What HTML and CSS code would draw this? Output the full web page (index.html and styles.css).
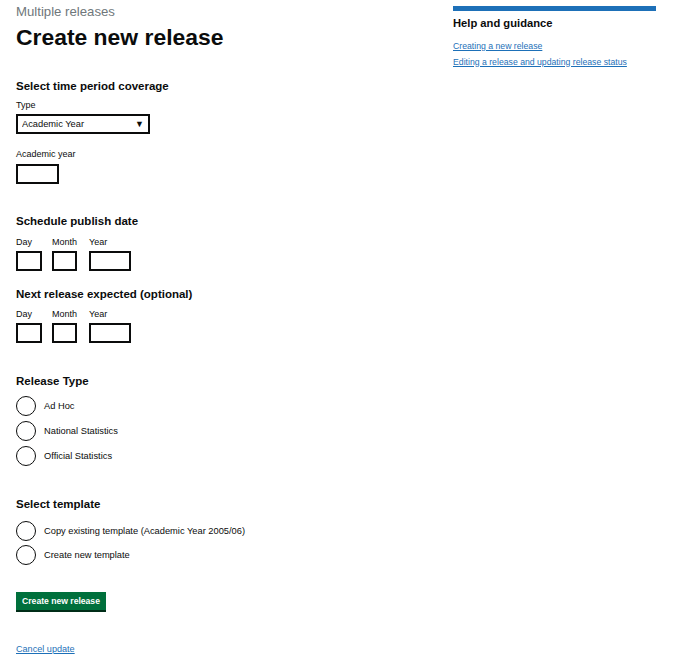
FILE: index.html
```html
<!DOCTYPE html>
<html lang="en">
<head>
<meta charset="utf-8">
<title>Create new release</title>
<link rel="stylesheet" href="styles.css">
</head>
<body>
<div class="page">
  <main class="main">
    <span class="caption">Multiple releases</span>
    <h1 class="title">Create new release</h1>

    <form class="form">
      <fieldset class="group">
        <legend class="heading heading-first">Select time period coverage</legend>
        <label class="label label-type" for="type">Type</label>
        <span class="select-wrap">
          <select class="select" id="type">
            <option>Academic Year</option>
          </select>
        </span>
        <label class="label label-year" for="ayear">Academic year</label>
        <input class="input input-ayear" id="ayear" type="text">
      </fieldset>

      <fieldset class="group">
        <legend class="heading heading-schedule">Schedule publish date</legend>
        <div class="date">
          <div class="date-item date-day">
            <label class="label" for="sday">Day</label>
            <input class="input" id="sday" type="text">
          </div>
          <div class="date-item date-month">
            <label class="label" for="smonth">Month</label>
            <input class="input" id="smonth" type="text">
          </div>
          <div class="date-item date-year">
            <label class="label" for="syear">Year</label>
            <input class="input" id="syear" type="text">
          </div>
        </div>
      </fieldset>

      <fieldset class="group">
        <legend class="heading heading-next">Next release expected (optional)</legend>
        <div class="date date-next">
          <div class="date-item date-day">
            <label class="label" for="nday">Day</label>
            <input class="input" id="nday" type="text">
          </div>
          <div class="date-item date-month">
            <label class="label" for="nmonth">Month</label>
            <input class="input" id="nmonth" type="text">
          </div>
          <div class="date-item date-year">
            <label class="label" for="nyear">Year</label>
            <input class="input" id="nyear" type="text">
          </div>
        </div>
      </fieldset>

      <fieldset class="group">
        <legend class="heading heading-type">Release Type</legend>
        <div class="radios radios-type">
          <label class="radio"><input class="radio-input" type="radio" name="rtype"><span>Ad Hoc</span></label>
          <label class="radio"><input class="radio-input" type="radio" name="rtype"><span>National Statistics</span></label>
          <label class="radio"><input class="radio-input" type="radio" name="rtype"><span>Official Statistics</span></label>
        </div>
      </fieldset>

      <fieldset class="group">
        <legend class="heading heading-template">Select template</legend>
        <div class="radios radios-template">
          <label class="radio"><input class="radio-input" type="radio" name="tpl"><span>Copy existing template (Academic Year 2005/06)</span></label>
          <label class="radio"><input class="radio-input" type="radio" name="tpl"><span>Create new template</span></label>
        </div>
      </fieldset>

      <button class="button" type="button">Create new release</button>
      <a class="link cancel" href="#">Cancel update</a>
    </form>
  </main>

  <aside class="aside">
    <h2 class="aside-heading">Help and guidance</h2>
    <ul class="aside-list">
      <li><a class="link" href="#">Creating a new release</a></li>
      <li><a class="link" href="#">Editing a release and updating release status</a></li>
    </ul>
  </aside>
</div>
</body>
</html>
```

FILE: styles.css
```css
* { box-sizing: border-box; }

html, body {
  margin: 0;
  padding: 0;
  background: #ffffff;
}

body {
  font-family: "Liberation Sans", Arial, sans-serif;
  color: #0b0c0c;
}

.page {
  display: grid;
  grid-template-columns: 1fr 203px;
  column-gap: 20px;
  padding: 0 20px 0 16px;
  align-items: start;
}

.main {
  display: flex;
  flex-direction: column;
  align-items: flex-start;
}

.caption {
  display: block;
  margin-top: 4px;
  font-size: 13.2px;
  line-height: 16px;
  color: #6f777b;
}

.title {
  margin: 4px 0 0;
  font-size: 22.9px;
  line-height: 26px;
  font-weight: 700;
}

.form {
  display: flex;
  flex-direction: column;
  align-items: flex-start;
}

.group {
  border: 0;
  margin: 0;
  padding: 0;
  min-width: 0;
  display: flex;
  flex-direction: column;
  align-items: flex-start;
}

.heading {
  padding: 0;
  font-size: 11.5px;
  line-height: 14px;
  font-weight: 700;
  float: left;
  width: 100%;
}

.heading-first { margin-top: 29px; }
.heading-schedule { margin-top: 30px; }
.heading-next { margin-top: 16px; }
.heading-type { margin-top: 31px; }
.heading-template { margin-top: 31px; }

.label {
  display: block;
  font-size: 9px;
  line-height: 12px;
}

.label-type { margin-top: 6px; }
.label-year { margin-top: 14px; }

.select-wrap {
  position: relative;
  display: block;
  margin-top: 3px;
  width: 134px;
  height: 20px;
}

.select-wrap::after {
  content: "\25BC";
  position: absolute;
  right: 6px;
  top: 4px;
  font-size: 9px;
  line-height: 12px;
  color: #0b0c0c;
  pointer-events: none;
}

.select {
  appearance: none;
  -webkit-appearance: none;
  display: block;
  width: 100%;
  height: 20px;
  margin: 0;
  padding: 0 0 0 4px;
  border: 2px solid #0b0c0c;
  border-radius: 0;
  background: #ffffff;
  font-family: inherit;
  font-size: 9.3px;
  color: #0b0c0c;
}

.input {
  display: block;
  height: 20px;
  margin: 4px 0 0;
  padding: 0 3px;
  border: 2px solid #0b0c0c;
  border-radius: 0;
  background: #ffffff;
  font-family: inherit;
  font-size: 9.3px;
}

.input-ayear { width: 43px; }

.date {
  display: flex;
  margin-top: 8px;
}

.date-next { margin-top: 7px; }

.date .input { margin-top: 3px; }

.date-day { width: 26px; margin-right: 10px; }
.date-month { width: 25px; margin-right: 12px; }
.date-year { width: 42px; }

.date-item .input { width: 100%; }

.radios {
  display: flex;
  flex-direction: column;
  gap: 5px;
}

.radios-type { margin-top: 8px; }
.radios-template { margin-top: 10px; gap: 4px; }

.radio {
  display: flex;
  align-items: center;
  gap: 8px;
  height: 20px;
  font-size: 9.3px;
  line-height: 12px;
}

.radio-input {
  appearance: none;
  -webkit-appearance: none;
  width: 20px;
  height: 20px;
  margin: 0;
  border: 1.6px solid #0b0c0c;
  border-radius: 50%;
  background: #ffffff;
}

.button {
  margin-top: 27px;
  width: 90px;
  height: 18px;
  padding: 0;
  border: 0;
  border-radius: 0;
  background: #00703c;
  box-shadow: 0 2px 0 #002d18;
  color: #ffffff;
  font-family: inherit;
  font-size: 8.6px;
  font-weight: 700;
  line-height: 18px;
  text-align: center;
}

.link {
  color: #1d70b8;
  text-decoration: underline;
  font-size: 8.7px;
  line-height: 12px;
}

.cancel {
  display: block;
  margin-top: 33px;
  font-size: 9.1px;
}

.aside {
  margin-top: 6px;
  border-top: 5px solid #1d70b8;
}

.aside-heading {
  margin: 5px 0 0;
  font-size: 11.2px;
  line-height: 14px;
  font-weight: 700;
}

.aside-list {
  list-style: none;
  margin: 10px 0 0;
  padding: 0;
  display: flex;
  flex-direction: column;
  gap: 3.5px;
}

.aside-list li {
  line-height: 12px;
  font-size: 8.7px;
}
```
